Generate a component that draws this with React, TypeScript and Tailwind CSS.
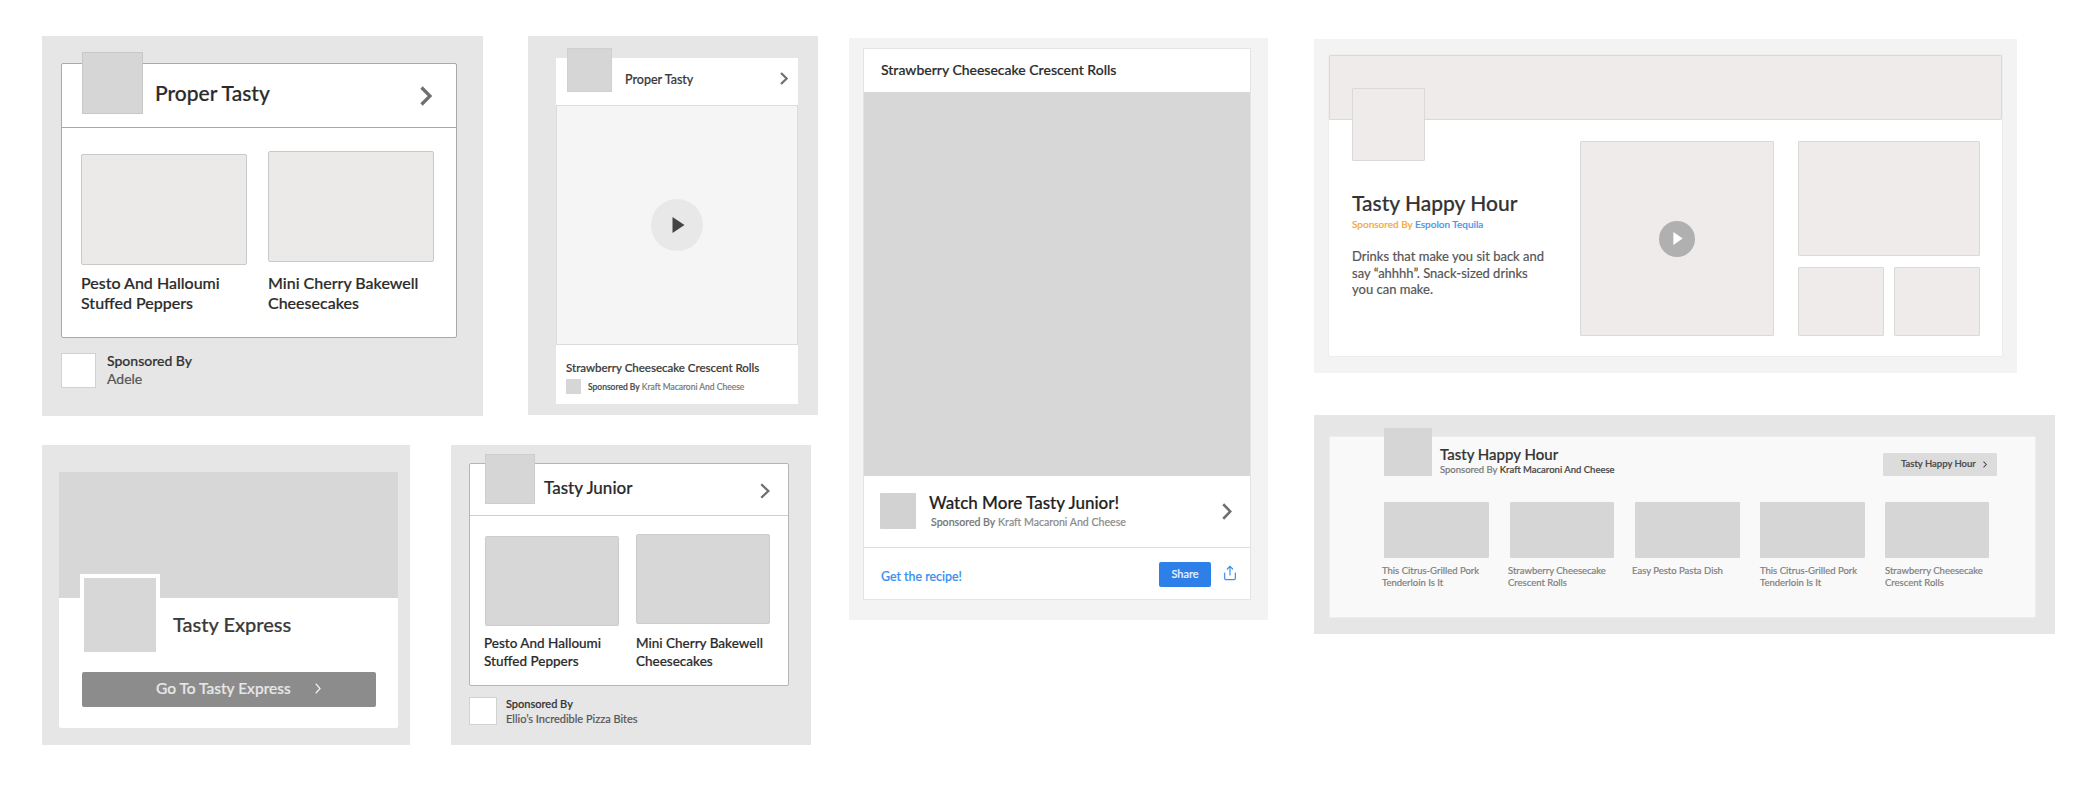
import React from "react";
import { Share } from "lucide-react";

const font = { fontFamily: '"Lato", "Open Sans", sans-serif' };

function Chevron({ className, w = 3, color = "#6f6f6f" }: { className: string; w?: number; color?: string }) {
  return (
    <svg viewBox="0 0 12 20" className={className} fill="none" stroke={color} strokeWidth={w} preserveAspectRatio="none">
      <path d="M1.5 1.5 L10 10 L1.5 18.5" />
    </svg>
  );
}

function ProperTastyCard() {
  return (
    <section className="w-[441px] h-[380px] bg-[#e6e6e6] pt-[27px] pl-[19px]">
      <div className="w-[396px] h-[275px] bg-white border border-[#a9a9a9] rounded-[2px]">
        <div className="h-[64px] border-b border-[#a9a9a9] flex items-start pl-[20px]">
          <div className="w-[61px] h-[62px] -mt-[12px] bg-[#d6d6d6] border border-[#c8c8c8]" />
          <span className="ml-[12px] mt-[15px] text-[21px] leading-[28px] font-medium text-[#2b2b2b]">Proper Tasty</span>
          <Chevron className="w-[12px] h-[20px] ml-auto mr-[24px] mt-[22px]" w={3.2} />
        </div>
        <div className="flex pl-[19px]">
          <div className="w-[166px] h-[111px] mt-[26px] bg-[#ebeae9] border border-[#c9c9c9] rounded-[2px]" />
          <div className="w-[166px] h-[111px] ml-[21px] mt-[23px] bg-[#ebeae9] border border-[#c9c9c9] rounded-[2px]" />
        </div>
        <div className="flex pl-[19px] mt-[8px] text-[16px] leading-[20px] font-medium text-[#2b2b2b]">
          <p className="w-[166px]">Pesto And Halloumi Stuffed Peppers</p>
          <p className="w-[166px] ml-[21px]">Mini Cherry Bakewell Cheesecakes</p>
        </div>
      </div>
      <div className="flex mt-[15px]">
        <div className="w-[35px] h-[35px] bg-white border border-[#d2d2d2]" />
        <div className="ml-[11px] text-[14px] leading-[18px] -mt-[1px]">
          <p className="font-medium text-[#333]">Sponsored By</p>
          <p className="text-[#555]">Adele</p>
        </div>
      </div>
    </section>
  );
}

function VideoCard() {
  return (
    <section className="w-[290px] h-[379px] bg-[#e6e6e6] pt-[22px] pl-[28px]">
      <div className="w-[242px] h-[346px] bg-white flex flex-col">
        <div className="h-[47px] flex items-start pl-[11px]">
          <div className="w-[45px] h-[44px] -mt-[10px] bg-[#d6d6d6] border border-[#d0d0d0]" />
          <span className="ml-[13px] mt-[13px] text-[12.5px] leading-[18px] font-medium text-[#3a3a3a]">Proper Tasty</span>
          <Chevron className="w-[8px] h-[13px] ml-auto mr-[10px] mt-[14px]" w={3.2} />
        </div>
        <div className="h-[240px] bg-[#f5f5f5] border border-[#dcdcdc] flex items-center justify-center">
          <div className="w-[52px] h-[52px] rounded-full bg-[#e8e8e8] flex items-center justify-center">
            <svg viewBox="0 0 12 16" className="w-[13px] h-[16px] ml-[2px]" fill="#444"><path d="M0 0 L12 8 L0 16 Z" /></svg>
          </div>
        </div>
        <p className="ml-[10px] mt-[14px] text-[11.5px] leading-[18px] font-medium text-[#3a3a3a]">Strawberry Cheesecake Crescent Rolls</p>
        <div className="flex items-center ml-[10px] mt-[2px]">
          <div className="w-[15px] h-[15px] bg-[#d6d6d6]" />
          <span className="ml-[7px] text-[8.5px] leading-[14px] text-[#777]"><span className="font-medium text-[#444]">Sponsored By</span> Kraft Macaroni And Cheese</span>
        </div>
      </div>
    </section>
  );
}

function ExpressCard() {
  return (
    <section className="w-[368px] h-[300px] bg-[#e6e6e6] pt-[27px] pl-[17px]">
      <div className="w-[339px] h-[256px] bg-white rounded-[2px]">
        <div className="h-[126px] bg-[#d7d7d7]" />
        <div className="flex items-start -mt-[24px] pl-[21px]">
          <div className="w-[80px] h-[78px] border-[4px] border-b-0 border-white bg-[#d7d7d7]" />
          <span className="ml-[13px] mt-[36px] text-[20px] leading-[28px] font-medium text-[#3a3a3a]">Tasty Express</span>
        </div>
        <div className="w-[294px] h-[35px] ml-[23px] mt-[20px] bg-[#8c8c8c] rounded-[2px] flex items-center pl-[74px] pb-[2px] text-[15.5px] font-medium text-[#e8e8e8]">
          <span>Go To Tasty Express</span>
          <Chevron className="w-[6px] h-[11px] ml-[24px]" w={2.6} color="#eeeeee" />
        </div>
      </div>
    </section>
  );
}

function JuniorCard() {
  return (
    <section className="w-[360px] h-[300px] bg-[#e6e6e6] pt-[18px] pl-[18px]">
      <div className="w-[320px] h-[223px] bg-white border border-[#b5b5b5] rounded-[2px]">
        <div className="h-[52px] border-b border-[#cfcfcf] flex items-start pl-[15px]">
          <div className="w-[50px] h-[50px] -mt-[10px] bg-[#d6d6d6] border border-[#cdcdcd]" />
          <span className="ml-[9px] mt-[12px] text-[17px] leading-[24px] font-medium text-[#2b2b2b]">Tasty Junior</span>
          <Chevron className="w-[10px] h-[16px] ml-auto mr-[18px] mt-[19px]" w={2.8} />
        </div>
        <div className="flex pl-[15px]">
          <div className="w-[134px] h-[90px] mt-[20px] bg-[#d7d7d7] border border-[#cccccc] rounded-[2px]" />
          <div className="w-[134px] h-[90px] ml-[17px] mt-[18px] bg-[#d7d7d7] border border-[#cccccc] rounded-[2px]" />
        </div>
        <div className="flex pl-[14px] mt-[8px] text-[13.5px] leading-[18px] font-medium text-[#2b2b2b]">
          <p className="w-[135px]">Pesto And Halloumi Stuffed Peppers</p>
          <p className="w-[134px] ml-[17px]">Mini Cherry Bakewell Cheesecakes</p>
        </div>
      </div>
      <div className="flex mt-[11px]">
        <div className="w-[28px] h-[28px] bg-white border border-[#d2d2d2]" />
        <div className="ml-[9px] text-[11px] leading-[15px] -mt-[1px]">
          <p className="font-medium text-[#333]">Sponsored By</p>
          <p className="text-[#555]">Ellio’s Incredible Pizza Bites</p>
        </div>
      </div>
    </section>
  );
}

function RecipeCard() {
  return (
    <section className="w-[419px] h-[582px] bg-[#f3f3f3] pt-[10px] pl-[14px]">
      <div className="w-[388px] h-[552px] bg-white border border-[#e4e4e4]">
        <p className="h-[43px] pl-[17px] pt-[11px] text-[14px] leading-[20px] font-medium text-[#2b2b2b]">Strawberry Cheesecake Crescent Rolls</p>
        <div className="h-[384px] bg-[#d7d7d7]" />
        <div className="h-[72px] border-b border-[#dddddd] flex items-start pl-[16px] pt-[17px]">
          <div className="w-[36px] h-[36px] bg-[#d2d2d2] rounded-[1px]" />
          <div className="ml-[13px] -mt-[2px]">
            <p className="text-[17px] leading-[24px] font-medium text-[#222]">Watch More Tasty Junior!</p>
            <p className="ml-[2px] text-[10.6px] leading-[15px] text-[#8a8a8a]"><span className="font-medium text-[#777]">Sponsored By</span> Kraft Macaroni And Cheese</p>
          </div>
          <Chevron className="w-[10px] h-[17px] ml-auto mr-[18px] mt-[10px]" w={3} />
        </div>
        <div className="h-[50px] flex items-start pl-[17px]">
          <a className="mt-[20px] text-[12.4px] leading-[18px] font-medium text-[#3b8fee]">Get the recipe!</a>
          <button className="ml-auto mt-[14px] w-[52px] h-[25px] bg-[#2c80e8] rounded-[2px] text-[11px] font-medium text-[#e8f1fd]">Share</button>
          <Share className="w-[16px] h-[18px] ml-[11px] mr-[12px] mt-[16px] text-[#3b8fee]" strokeWidth={1.8} />
        </div>
      </div>
    </section>
  );
}

function HappyHourHero() {
  const tile = "bg-[#eeebea] border border-[#d9d9d9] rounded-[1px]";
  return (
    <section className="w-[703px] h-[334px] bg-[#f3f3f3] pt-[15px] pl-[14px]">
      <div className="w-[675px] h-[303px] bg-white rounded-[2px] border border-[#ededed] flex flex-col">
        <div className={`h-[65px] ${tile}`} />
        <div className="flex pl-[23px]">
          <div className="w-[228px]">
            <div className={`w-[73px] h-[73px] -mt-[32px] ${tile}`} />
            <h2 className="mt-[28px] text-[21px] leading-[28px] font-medium text-[#333]">Tasty Happy Hour</h2>
            <p className="text-[10px] leading-[14px] font-medium text-[#f5a93c]">Sponsored By <span className="text-[#4d94e8]">Espolon Tequila</span></p>
            <p className="mt-[17px] w-[198px] text-[13px] leading-[16.5px] text-[#555]">Drinks that make you sit back and say “ahhhh”. Snack-sized drinks you can make.</p>
          </div>
          <div className={`w-[194px] h-[195px] mt-[21px] flex items-center justify-center ${tile}`}>
            <div className="w-[36px] h-[36px] rounded-full bg-[#b0b0b0] flex items-center justify-center">
              <svg viewBox="0 0 10 14" className="w-[10px] h-[13px] ml-[2px]" fill="#ffffff"><path d="M0 0 L10 7 L0 14 Z" /></svg>
            </div>
          </div>
          <div className="ml-[24px] mt-[21px] w-[182px]">
            <div className={`h-[115px] ${tile}`} />
            <div className="flex justify-between mt-[11px]">
              <div className={`w-[86px] h-[69px] ${tile}`} />
              <div className={`w-[86px] h-[69px] ${tile}`} />
            </div>
          </div>
        </div>
      </div>
    </section>
  );
}

const recipes = [
  { t: "This Citrus-Grilled Pork Tenderloin Is It", w: "w-[105px]", m: "ml-0", tm: "-ml-[2px]" },
  { t: "Strawberry Cheesecake Crescent Rolls", w: "w-[104px]", m: "ml-[21px]", tm: "-ml-[2px]" },
  { t: "Easy Pesto Pasta Dish", w: "w-[105px]", m: "ml-[21px]", tm: "-ml-[3px]" },
  { t: "This Citrus-Grilled Pork Tenderloin Is It", w: "w-[105px]", m: "ml-[20px]", tm: "ml-0" },
  { t: "Strawberry Cheesecake Crescent Rolls", w: "w-[104px]", m: "ml-[20px]", tm: "ml-0" },
];

function HappyHourStrip() {
  return (
    <section className="w-[741px] h-[219px] bg-[#e6e6e6] pt-[21px] pl-[15px] mt-[42px]">
      <div className="w-[707px] h-[182px] bg-[#f9f9f9] border border-[#ededed] rounded-[1px]">
        <div className="flex items-start pl-[54px]">
          <div className="w-[48px] h-[48px] -mt-[9px] bg-[#d6d6d6] rounded-[1px]" />
          <div className="ml-[8px] mt-[7px]">
            <p className="text-[15px] leading-[20px] font-medium text-[#333]">Tasty Happy Hour</p>
            <p className="text-[9.5px] leading-[12px] text-[#777]">Sponsored By <span className="font-medium text-[#444]">Kraft Macaroni And Cheese</span></p>
          </div>
          <div className="ml-auto mr-[38px] mt-[16px] w-[114px] h-[23px] bg-[#dcdcdc] rounded-[1px] flex items-center pl-[18px] text-[9.5px] font-medium text-[#444]">
            <span>Tasty Happy Hour</span>
            <Chevron className="w-[4px] h-[7px] ml-[7px]" w={3} color="#444444" />
          </div>
        </div>
        <div className="flex pl-[54px] mt-[26px]">
          {recipes.map((r, i) => (
            <div key={i} className={`${r.w} ${r.m}`}>
              <div className="h-[56px] bg-[#d6d6d6] rounded-[1px]" />
              <p className={`mt-[7px] w-[110px] text-[9.5px] leading-[11.5px] text-[#808080] ${r.tm}`}>{r.t}</p>
            </div>
          ))}
        </div>
      </div>
    </section>
  );
}

export default function App() {
  return (
    <div className="w-[2092px] h-[811px] bg-white flex items-start pl-[42px] pt-[36px] overflow-hidden [-webkit-text-stroke:0.2px]" style={font}>
      <div className="w-[776px] flex flex-col gap-[29px]">
        <div className="flex items-start gap-[45px]">
          <ProperTastyCard />
          <VideoCard />
        </div>
        <div className="flex items-start gap-[41px]">
          <ExpressCard />
          <JuniorCard />
        </div>
      </div>
      <div className="ml-[31px] mt-[2px]">
        <RecipeCard />
      </div>
      <div className="ml-[46px] mt-[3px]">
        <HappyHourHero />
        <HappyHourStrip />
      </div>
    </div>
  );
}
